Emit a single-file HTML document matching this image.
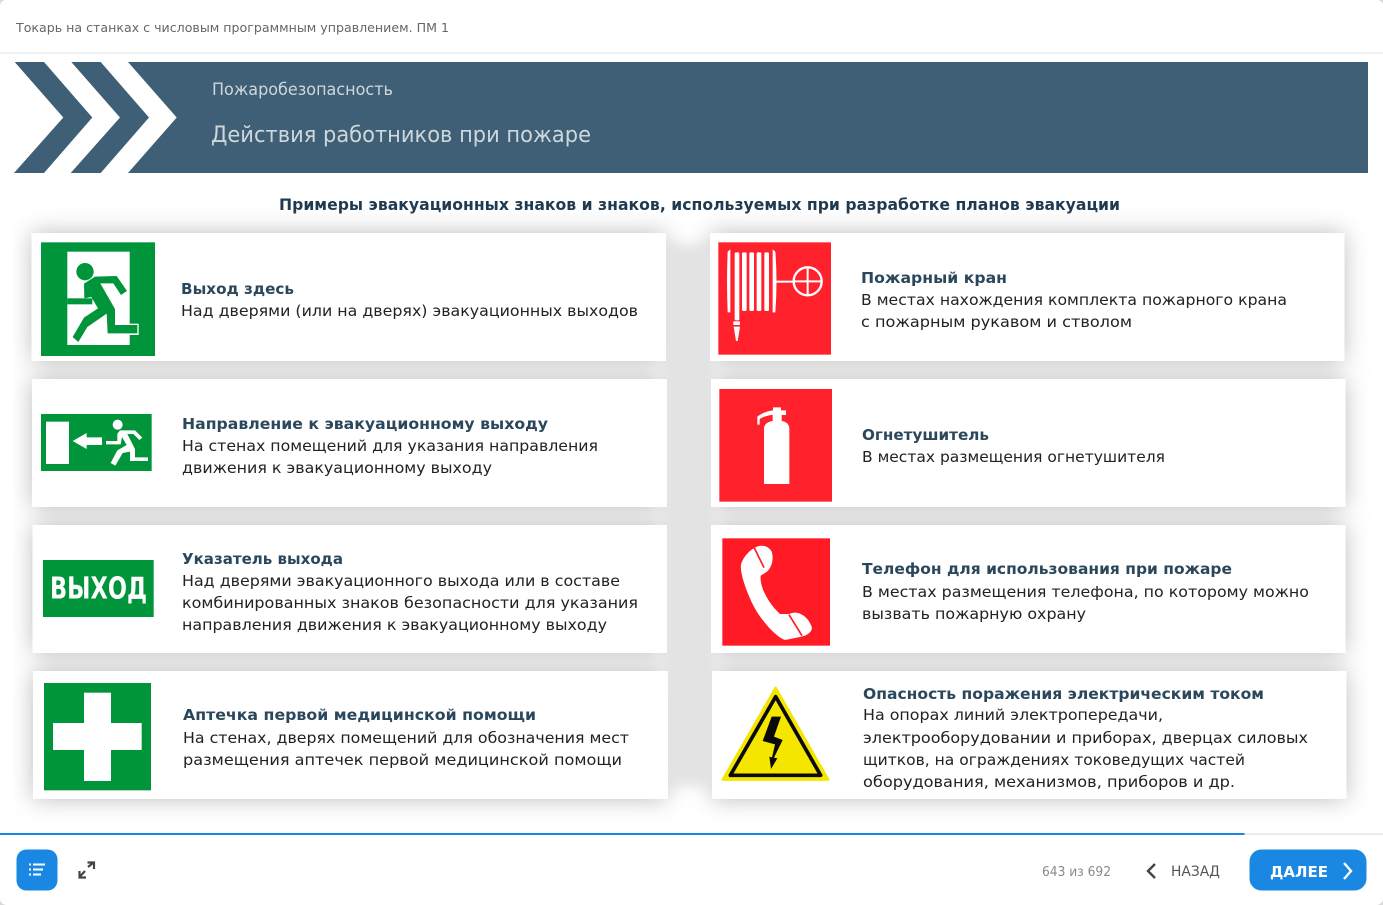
<!DOCTYPE html>
<html lang="ru">
<head>
<meta charset="utf-8">
<title>Действия работников при пожаре</title>
<style>
html,body{margin:0;padding:0;background:#fff;width:1383px;height:905px;overflow:hidden}
svg{display:block}
text{font-family:"DejaVu Sans","Liberation Sans",sans-serif;white-space:pre}
.t{font-size:15.5px;font-weight:700;fill:#2b475c}
.b{font-size:15.5px;fill:#222}
</style>
</head>
<body>
<svg width="1383" height="905" viewBox="0 0 1383 905" xmlns="http://www.w3.org/2000/svg">
<defs>
<filter id="s" x="-20%" y="-40%" width="140%" height="180%"><feGaussianBlur stdDeviation="12"/></filter>
<filter id="g" x="-50%" y="-10%" width="200%" height="120%"><feGaussianBlur stdDeviation="6"/></filter>
<clipPath id="c"><rect x="14" y="175" width="1369" height="648"/></clipPath>
</defs>
<rect width="1383" height="905" fill="#fff"/>

<!-- header -->
<text x="16" y="32" font-size="12.500" fill="#666" textLength="433" lengthAdjust="spacingAndGlyphs">Токарь на станках с числовым программным управлением. ПМ 1</text>
<rect y="52" width="1383" height="2" fill="#f0f0f0"/>

<!-- banner -->
<g fill="#3e5f75">
<polygon points="14.7,62 44,62 92.3,117.5 44,173 14,173 63.3,117.5"/>
<polygon points="71.3,62 100.7,62 149,117.5 100.7,173 70.7,173 120,117.5"/>
<polygon points="128,62 1368,62 1368,173 128,173 176.7,117.5"/>
</g>
<text x="212" y="95" font-size="17" fill="#ced7dc" textLength="181" lengthAdjust="spacingAndGlyphs">Пожаробезопасность</text>
<text x="211" y="142" font-size="22.500" fill="#ced7dc" textLength="380" lengthAdjust="spacingAndGlyphs">Действия работников при пожаре</text>

<text x="279" y="210" font-size="16" font-weight="700" fill="#1f3a50" textLength="841" lengthAdjust="spacingAndGlyphs">Примеры эвакуационных знаков и знаков, используемых при разработке планов эвакуации</text>

<!-- shadows -->
<g clip-path="url(#c)">
<g fill="#bcbcbc" filter="url(#s)">
<path d="M32,233H666V361H32Z M32,379H666V507H32Z M33,525H667V653H33Z M33,671H667V799H33Z M710,233H1344V361H710Z M711,379H1345V507H711Z M711,525H1345V653H711Z M712,671H1346V799H712Z"/>
</g>
<rect x="660" y="244" width="58" height="542" fill="#e3e3e3" filter="url(#g)"/>
</g>
<!-- cards -->
<g fill="#fff">
<rect x="31.500" y="233" width="634.500" height="128"/>
<rect x="32" y="379" width="635" height="128"/>
<rect x="32.500" y="525" width="634.500" height="128"/>
<rect x="33" y="671" width="635" height="128"/>
<rect x="710" y="233" width="634.500" height="128"/>
<rect x="711" y="379" width="634.500" height="128"/>
<rect x="711" y="525" width="634.500" height="128"/>
<rect x="712" y="671" width="634.500" height="128"/>
</g>

<!-- sign 1 -->
<g transform="translate(20,225) scale(.33333)">
<rect x="63" y="52" width="342" height="341" fill="#00953a"/>
<rect x="142" y="80" width="187" height="280" fill="#fff"/>
<rect x="262" y="296" width="94" height="34" fill="#fff"/>
<g fill="#00953a">
<rect x="142" y="220" width="75" height="18"/>
<circle cx="195" cy="140" r="26"/>
<polygon points="192,176 225,155 290,153 321,198 303,210 280,175 241,175 285,252 285,300 352,300 352,325 263,325 260,266 202,306 175,351 158,336 192,278 234,250 214,216 193,220"/>
</g>
</g>

<!-- sign 2 -->
<g transform="translate(20,225) scale(.33333)">
<rect x="63" y="567" width="332" height="171" fill="#00953a"/>
<rect x="78" y="590" width="69" height="127" fill="#fff"/>
<polygon points="158,648 200,624 200,637 246,637 246,660 200,660 200,672" fill="#fff"/>
<g fill="#fff">
<circle cx="293" cy="599" r="15"/>
<polygon points="258,648 292,648 292,626 300,616 345,616 367,638 358,645 340,627 322,627 345,672 345,697 384,697 384,708 330,708 330,680 308,684 286,722 272,714 292,676 320,660 306,636 302,658 258,658"/>
</g>
</g>

<!-- sign 3 -->
<g transform="translate(20,515) scale(.33333)">
<rect x="69" y="135" width="332" height="171" fill="#00953a"/>
</g>
<text x="50" y="598.500" font-size="30" font-weight="700" fill="#fff" textLength="97" lengthAdjust="spacingAndGlyphs">ВЫХОД</text>

<!-- sign 4 -->
<g transform="translate(20,515) scale(.33333)">
<rect x="72" y="504" width="321" height="322" fill="#00953a"/>
<rect x="192" y="533" width="81" height="265" fill="#fff"/>
<rect x="99" y="624" width="266" height="81" fill="#fff"/>
</g>

<!-- hydrant -->
<g transform="translate(700,225) scale(.33333)">
<rect x="55" y="52" width="338" height="337" fill="#ff222d"/>
<g fill="#fff">
<path d="M91,73 L91,262 L83,262 Q79,170 83,80 Z"/>
<rect x="104" y="82" width="14" height="204" rx="4"/>
<rect x="126" y="82" width="14" height="176" rx="4"/>
<rect x="148" y="82" width="14" height="176" rx="4"/>
<rect x="170" y="82" width="14" height="176" rx="4"/>
<rect x="193" y="82" width="14" height="176" rx="4"/>
<path d="M218,73 L218,262 L226,262 Q233,170 226,80 Z"/>
<rect x="228" y="167" width="56" height="6"/>
<rect x="100" y="289" width="20" height="11" rx="2"/>
<polygon points="101,305 120,305 113,348 108,348"/>
</g>
<circle cx="323" cy="169" r="42" fill="none" stroke="#fff" stroke-width="7"/>
<path d="M323,127 V211 M281,169 H365" stroke="#fff" stroke-width="6" fill="none"/>
</g>

<!-- extinguisher -->
<g transform="translate(700,225) scale(.33333)">
<rect x="58" y="492" width="338" height="338" fill="#ff222d"/>
<g fill="#fff">
<path d="M192,777 V612 Q192,592 218,588 V570 H245 V588 Q268,592 268,612 V777 Z"/>
<path d="M219,547 H243 V556 H258 V570 H214 Q190,574 179,582 V599 H172 V575 Q190,560 219,556 Z"/>
</g>
</g>

<!-- phone -->
<g transform="translate(700,515) scale(.33333)">
<rect x="67" y="70" width="323" height="322" fill="#ff1a25"/>
<path d="M165,98 C180,88 205,90 215,110 C222,130 216,160 198,172 L182,182 C178,215 205,265 240,297 L268,297 C290,285 322,300 335,335 C338,345 330,355 315,362 L300,366 L255,375 C225,365 172,305 150,250 C130,205 120,165 123,148 C130,125 150,105 165,98 Z" fill="#fff"/>
<path d="M163,99 L192,158 M267,299 L306,362" stroke="#ff1a25" stroke-width="5" fill="none"/>
</g>

<!-- warning -->
<g transform="translate(700,515) scale(.33333)">
<path d="M227,518 L385,794 H68 Z" fill="#f5e600" stroke="#f5e600" stroke-width="7" stroke-linejoin="round"/>
<path d="M227,545 L362,781 H91 Z" fill="#f5e600" stroke="#0a0a0a" stroke-width="11" stroke-linejoin="round"/>
<polygon points="215,605 243,605 222,665 248,675 222,728 232,730 213,762 208,725 216,727 225,688 188,678" fill="#0a0a0a"/>
</g>

<!-- left texts -->
<text class="t" x="181" y="294" textLength="113" lengthAdjust="spacingAndGlyphs">Выход здесь</text>
<text class="b" x="181" y="316" textLength="457" lengthAdjust="spacingAndGlyphs">Над дверями (или на дверях) эвакуационных выходов</text>

<text class="t" x="182" y="429" textLength="366" lengthAdjust="spacingAndGlyphs">Направление к эвакуационному выходу</text>
<text class="b" x="182" y="451" textLength="416" lengthAdjust="spacingAndGlyphs">На стенах помещений для указания направления</text>
<text class="b" x="182" y="473" textLength="310" lengthAdjust="spacingAndGlyphs">движения к эвакуационному выходу</text>

<text class="t" x="182" y="564" textLength="161" lengthAdjust="spacingAndGlyphs">Указатель выхода</text>
<text class="b" x="182" y="586" textLength="438" lengthAdjust="spacingAndGlyphs">Над дверями эвакуационного выхода или в составе</text>
<text class="b" x="182" y="608" textLength="456" lengthAdjust="spacingAndGlyphs">комбинированных знаков безопасности для указания</text>
<text class="b" x="182" y="630" textLength="425" lengthAdjust="spacingAndGlyphs">направления движения к эвакуационному выходу</text>

<text class="t" x="183" y="720" textLength="353" lengthAdjust="spacingAndGlyphs">Аптечка первой медицинской помощи</text>
<text class="b" x="183" y="743" textLength="446" lengthAdjust="spacingAndGlyphs">На стенах, дверях помещений для обозначения мест</text>
<text class="b" x="183" y="765" textLength="439" lengthAdjust="spacingAndGlyphs">размещения аптечек первой медицинской помощи</text>

<!-- right texts -->
<text class="t" x="861" y="283" textLength="146" lengthAdjust="spacingAndGlyphs">Пожарный кран</text>
<text class="b" x="861" y="305" textLength="426" lengthAdjust="spacingAndGlyphs">В местах нахождения комплекта пожарного крана</text>
<text class="b" x="861" y="327" textLength="271" lengthAdjust="spacingAndGlyphs">с пожарным рукавом и стволом</text>

<text class="t" x="862" y="440" textLength="127" lengthAdjust="spacingAndGlyphs">Огнетушитель</text>
<text class="b" x="862" y="462" textLength="303" lengthAdjust="spacingAndGlyphs">В местах размещения огнетушителя</text>

<text class="t" x="862" y="574" textLength="370" lengthAdjust="spacingAndGlyphs">Телефон для использования при пожаре</text>
<text class="b" x="862" y="597" textLength="447" lengthAdjust="spacingAndGlyphs">В местах размещения телефона, по которому можно</text>
<text class="b" x="862" y="619" textLength="224" lengthAdjust="spacingAndGlyphs">вызвать пожарную охрану</text>

<text class="t" x="863" y="699" textLength="401" lengthAdjust="spacingAndGlyphs">Опасность поражения электрическим током</text>
<text class="b" x="863" y="720" textLength="300" lengthAdjust="spacingAndGlyphs">На опорах линий электропередачи,</text>
<text class="b" x="863" y="743" textLength="445" lengthAdjust="spacingAndGlyphs">электрооборудовании и приборах, дверцах силовых</text>
<text class="b" x="863" y="765" textLength="382" lengthAdjust="spacingAndGlyphs">щитков, на ограждениях токоведущих частей</text>
<text class="b" x="863" y="787" textLength="372" lengthAdjust="spacingAndGlyphs">оборудования, механизмов, приборов и др.</text>

<!-- footer -->
<rect y="833" width="1383" height="2" fill="#ececec"/>
<rect y="833" width="1244.500" height="2" fill="#1a88e2"/>
<rect x="16.500" y="849.500" width="41" height="41" rx="10" fill="#1a88e2"/>
<g fill="#fff">
<rect x="29" y="863.500" width="2" height="2"/><rect x="33" y="863.500" width="12" height="2"/>
<rect x="29" y="868.500" width="2" height="2"/><rect x="33" y="868.500" width="10" height="2"/>
<rect x="29" y="873.500" width="2" height="2"/><rect x="33" y="873.500" width="8" height="2"/>
</g>
<g fill="none" stroke="#444" stroke-width="2.200">
<path d="M88,867 L93.500,862.500 M87.500,862.500 H94 V869"/>
<path d="M85,871 L79.500,877 M79.500,871 V877.500 H86"/>
</g>
<text x="1042" y="876" font-size="13" fill="#8a8a8a" textLength="69" lengthAdjust="spacingAndGlyphs">643 из 692</text>
<path d="M1155,864 L1148,871 L1155,878" fill="none" stroke="#444" stroke-width="2.400"/>
<text x="1171" y="876" font-size="14" fill="#555" textLength="49" lengthAdjust="spacingAndGlyphs">НАЗАД</text>
<rect x="1249.500" y="849.500" width="117" height="41" rx="12" fill="#1a88e2"/>
<text x="1270" y="877" font-size="15.500" font-weight="700" fill="#fff" textLength="58" lengthAdjust="spacingAndGlyphs">ДАЛЕЕ</text>
<path d="M1344,863 L1351,871 L1344,879" fill="none" stroke="#fff" stroke-width="2.400"/>

<!-- page corners -->
<g fill="#d8d8d8">
<path d="M0,0 H5 Q0,1 0,6 Z"/>
<path d="M1383,0 H1378 Q1383,1 1383,6 Z"/>
<path d="M0,905 H6 Q0,904 0,898 Z"/>
<path d="M1383,905 H1377 Q1383,904 1383,898 Z"/>
</g>
</svg>
</body>
</html>
